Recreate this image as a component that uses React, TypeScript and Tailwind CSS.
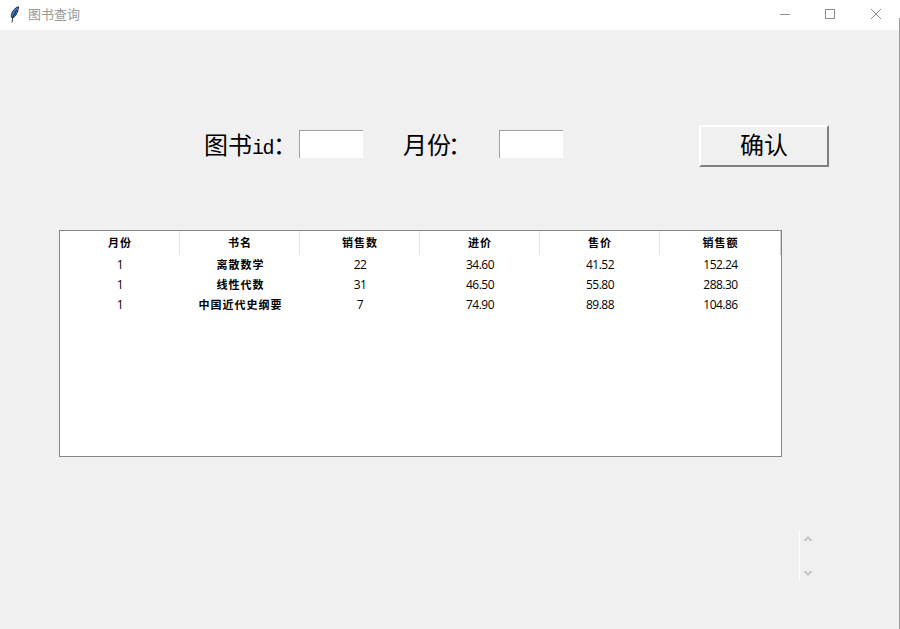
import React from 'react';

const SERIF = "font-['Liberation_Serif','Noto_Sans_CJK_SC',serif]";
const CJK = "font-['Noto_Sans_CJK_SC',sans-serif]";

const COLUMNS = ['月份', '书名', '销售数', '进价', '售价', '销售额'];

const ROWS = [
  ['1', '离散数学', '22', '34.60', '41.52', '152.24'],
  ['1', '线性代数', '31', '46.50', '55.80', '288.30'],
  ['1', '中国近代史纲要', '7', '74.90', '89.88', '104.86'],
];

const TitleBar = () => (
  <div className="h-[30px] pb-[2px] bg-white flex items-center justify-between shrink-0">
    <div className="flex items-center">
      <svg width="10" height="17" viewBox="0 0 10 17" className="ml-[10px]">
        <path d="M8.5 0.8 C5 1.6 2.2 5 1.4 9 C1.1 10.6 1.5 11.8 2.6 12 C5.6 10.6 8.4 5.6 8.5 0.8 Z" fill="#3b7fd6" stroke="#0a0a0a" strokeWidth="0.8" />
        <path d="M6.5 4 L2.6 12 L2 16.5" fill="none" stroke="#0a0a0a" strokeWidth="0.8" />
      </svg>
      <span className={`${CJK} ml-[8px] text-[13px] text-[#999999]`}>图书查询</span>
    </div>
    <div className="flex items-center pr-[17px]">
      <svg width="14" height="14" viewBox="0 0 14 14">
        <path d="M2 7.5 H12" stroke="#8f8f8f" strokeWidth="1" />
      </svg>
      <svg width="14" height="14" viewBox="0 0 14 14" className="ml-[31px]">
        <rect x="2.5" y="2.5" width="9" height="9" fill="none" stroke="#8f8f8f" strokeWidth="1" />
      </svg>
      <svg width="14" height="14" viewBox="0 0 14 14" className="ml-[32px]">
        <path d="M2 2 L12 12 M12 2 L2 12" stroke="#8f8f8f" strokeWidth="1" />
      </svg>
    </div>
  </div>
);

const Entry = () => (
  <div className="w-[64px] h-[28px] mb-[4px] bg-white border-t border-l border-[#a0a0a0]" />
);

const QueryForm = () => (
  <div className="flex items-center h-[42px] mt-[95px] text-black">
    <span className={`${SERIF} ml-[204px] w-[95px] text-[24px] leading-none whitespace-nowrap`}>
      图书<span className="font-['Liberation_Mono',monospace] text-[20px] tracking-[-1.5px]">id</span>：
    </span>
    <Entry />
    <span className={`${SERIF} ml-[40px] w-[96px] text-[24px] leading-none whitespace-nowrap`}>
      月<span className="tracking-[-3px]">份</span>：
    </span>
    <Entry />
    <button className={`${SERIF} ml-[136px] w-[130px] h-[42px] bg-[#f0f0f0] border-2 border-t-white border-l-white border-r-[#808080] border-b-[#808080] text-[24px] leading-none`}>
      确认
    </button>
  </div>
);

const ResultTable = () => (
  <div className="ml-[59px] mt-[63px] w-[723px] h-[227px] bg-white border border-[#86868e] text-black">
    <div className="flex h-[24px]">
      {COLUMNS.map((name, i) => (
        <div
          key={name}
          className={`${CJK} flex items-center justify-center pb-[2px] pl-[1px] text-[11px] font-bold tracking-[1px] border-r ${
            i === 5 ? 'w-[121px] border-[#cfcfcf]' : 'w-[120px] border-[#e5e5e5]'
          }`}
        >
          {name}
        </div>
      ))}
    </div>
    {ROWS.map((row) => (
      <div key={row[1]} className="flex h-[20px]">
        {row.map((cell, i) => (
          <div
            key={i}
            className={`flex items-center justify-center ${i === 5 ? 'w-[121px]' : 'w-[120px]'} ${
              i === 1
                ? `${CJK} pl-[1px] pb-[1px] text-[11px] font-bold tracking-[1px]`
                : "font-['Open_Sans',sans-serif] text-[12px] tracking-[-0.5px]"
            }`}
          >
            {cell}
          </div>
        ))}
      </div>
    ))}
  </div>
);

const SpinArrows = () => (
  <div className="ml-[799px] mt-[73px] w-[17px] h-[51px] border-l border-white flex flex-col items-center justify-between pt-[6px] pb-[5px]">
    <svg width="8" height="6" viewBox="0 0 8 6">
      <path d="M0.5 5 L4 1.5 L7.5 5" fill="none" stroke="#c4c4c4" strokeWidth="2" />
    </svg>
    <svg width="8" height="6" viewBox="0 0 8 6">
      <path d="M0.5 1 L4 4.5 L7.5 1" fill="none" stroke="#c4c4c4" strokeWidth="2" />
    </svg>
  </div>
);

export default function App() {
  return (
    <div className="w-[900px] h-[629px] bg-[#f0f0f0] flex flex-col overflow-hidden relative">
      <TitleBar />
      <QueryForm />
      <ResultTable />
      <SpinArrows />
      <div className="absolute right-0 top-[18px] bottom-0 w-px bg-[#9a9a9a]" />
    </div>
  );
}
